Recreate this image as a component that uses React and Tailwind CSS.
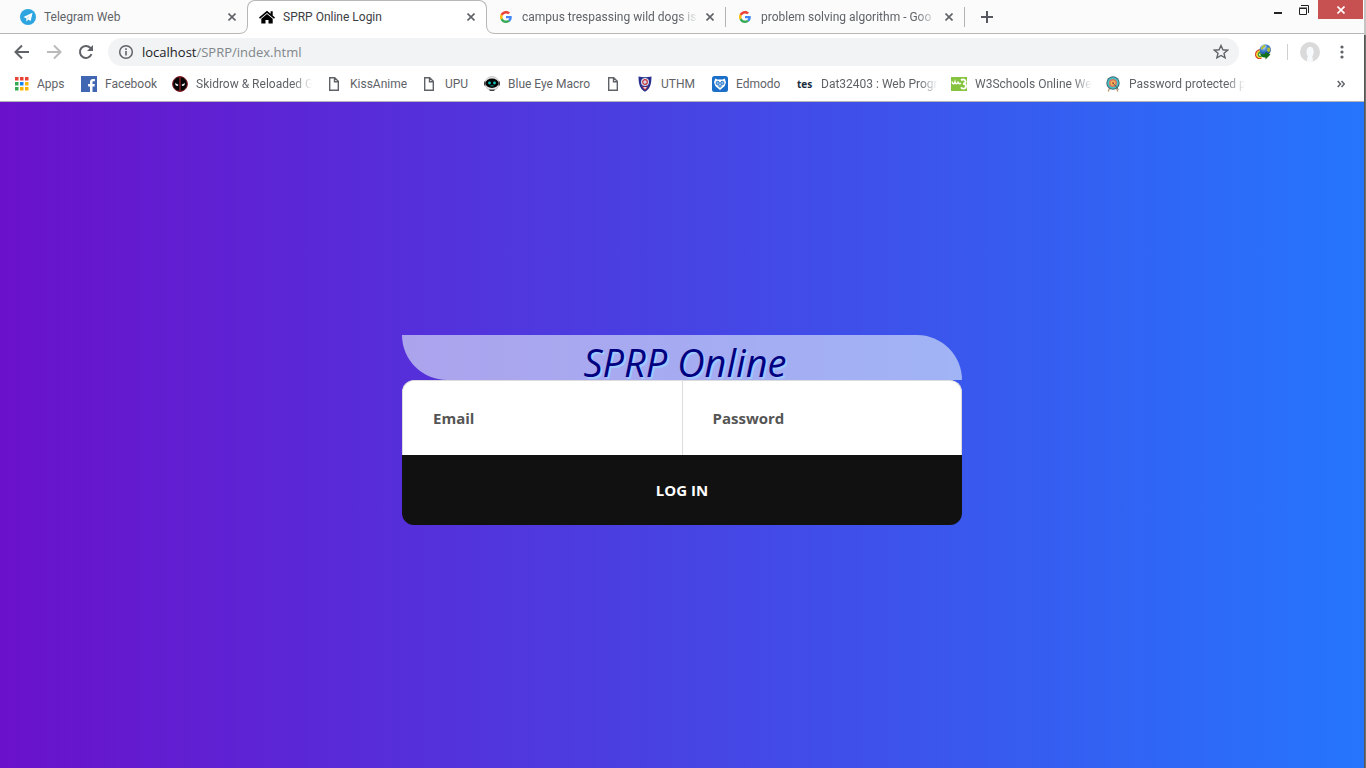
import React from "react";

const GoogleIcon = () => (
  <span className="flex size-4 shrink-0 items-center justify-center">
    <svg className="size-3" viewBox="0 0 48 48" aria-hidden="true">
      <path fill="#EA4335" d="M24 9.5c3.54 0 6.71 1.22 9.21 3.6l6.85-6.85C35.9 2.38 30.47 0 24 0 14.62 0 6.51 5.38 2.56 13.22l7.98 6.19C12.43 13.72 17.74 9.5 24 9.5z" />
      <path fill="#4285F4" d="M46.98 24.55c0-1.57-.15-3.09-.38-4.55H24v9.02h12.94c-.58 2.96-2.26 5.48-4.78 7.18l7.73 6c4.51-4.18 7.09-10.36 7.09-17.65z" />
      <path fill="#FBBC05" d="M10.53 28.59c-.48-1.45-.76-2.99-.76-4.59s.27-3.14.76-4.59l-7.98-6.19C.92 16.46 0 20.12 0 24c0 3.88.92 7.54 2.56 10.78l7.97-6.19z" />
      <path fill="#34A853" d="M24 48c6.48 0 11.93-2.13 15.89-5.81l-7.73-6c-2.15 1.45-4.92 2.3-8.16 2.3-6.26 0-11.57-4.22-13.47-9.91l-7.98 6.19C6.51 42.62 14.62 48 24 48z" />
    </svg>
  </span>
);

const TelegramIcon = () => (
  <svg className="size-4 shrink-0" viewBox="0 0 16 16" aria-hidden="true">
    <circle cx="8" cy="8" r="8" fill="#2ca5e0" />
    <path d="M12.5 3.8 3.5 8l2.6 1.2.5 3.2 1.8-1.8 2.3 1.5z" fill="#fff" />
    <path d="m6.1 9.2 4.4-3.3-3.2 4-.7 2.5z" fill="#b9dff2" />
  </svg>
);

const HomeIcon = () => (
  <svg className="size-4 shrink-0" viewBox="0 0 16 16" aria-hidden="true">
    <path d="M8 1.800 0 8.600l1 1.100L8 3.900l7 5.800 1-1.100-2.300-2V2.200h-2.100v2.600z" fill="#000" />
    <path d="M8 5 2.300 9.700V14.500h4.200v-3.600h3v3.600h4.200V9.700z" fill="#000" />
  </svg>
);

const CloseIcon = ({ className }) => (
  <svg className={className} viewBox="0 0 8 8" aria-hidden="true">
    <path d="m.5.5 7 7m0-7-7 7" stroke="currentColor" strokeWidth="1.6" />
  </svg>
);

const PageIcon = () => (
  <svg className="mr-0.5 h-3.5 w-3 shrink-0" viewBox="0 0 12 14" aria-hidden="true">
    <path d="M1.700.7h5l3.600 3.600v9h-8.600zM6.500.7v4h4" fill="none" stroke="#5f6368" strokeWidth="1.400" />
  </svg>
);

const FacebookIcon = () => (
  <svg className="size-4 shrink-0" viewBox="0 0 16 16" aria-hidden="true">
    <path d="M0 0h16v16H0z" fill="#4267b2" />
    <path d="M9 16v-5.500H7.100V8H9V6.200c0-2 1.200-3.200 3-3.200.9 0 1.700.1 1.900.1v2.200h-1.300c-.9 0-1.100.5-1.100 1.200V8h2.300l-.3 2.500h-2V16z" fill="#fff" />
  </svg>
);

const AppsIcon = () => (
  <svg className="size-3.5 shrink-0" viewBox="0 0 14 14" aria-hidden="true">
    <path d="M0 0h3.500v3.500H0zM5 0h3.500v3.500H5zM10 0h3.500v3.500H10z" fill="#ea4335" />
    <path d="M0 5h3.500v3.500H0zM0 10h3.500v3.500H0z" fill="#34a853" />
    <path d="M5 5h3.500v3.500H5z" fill="#1a84f5" />
    <path d="M10 5h3.500v3.500H10zM5 10h3.500v3.500H5zM10 10h3.500v3.500H10z" fill="#fbb404" />
  </svg>
);

const MaskIcon = () => (
  <svg className="size-4 shrink-0" viewBox="0 0 16 16" aria-hidden="true">
    <circle cx="8" cy="8" r="7.400" fill="#080808" stroke="#8e2026" strokeWidth="1" />
    <path d="M7.300 0h1.400v16H7.300z" fill="#8e2026" />
    <path d="m3 7 3.400 1.800-.6 1.300-2-.6zM13 7 9.600 8.800l.6 1.300 2-.6z" fill="#fff" />
  </svg>
);

const RobotIcon = () => (
  <svg className="size-4 shrink-0" viewBox="0 0 16 16" aria-hidden="true">
    <circle cx="8" cy="7.500" r="7" fill="#e8e8e8" stroke="#aaa" strokeWidth=".6" />
    <ellipse cx="8" cy="7.300" rx="6.600" ry="4.700" fill="#050505" />
    <path d="M0 5.500h1.500v4H0zM14.500 5.500H16v4h-1.500zM5 13.500h6l-1 1.500H6z" fill="#444" />
    <circle cx="5.500" cy="7" r="1.400" fill="#12c4b7" />
    <circle cx="10.500" cy="7" r="1.400" fill="#12c4b7" />
    <path d="M6.500 9.800h3" stroke="#12c4b7" strokeWidth=".8" />
  </svg>
);

const CrestIcon = () => (
  <svg className="size-4 shrink-0" viewBox="0 0 16 16" aria-hidden="true">
    <path d="M1.500.5c4 1 9 1 13 0-.2 7-.8 12-6.500 15.200C2.300 12.500 1.700 7.500 1.500.5z" fill="#26308c" />
    <circle cx="8" cy="6" r="4" fill="#d8dbe8" />
    <circle cx="8" cy="6" r="2.300" fill="none" stroke="#c7303c" strokeWidth="1.200" />
    <path d="m4.500 10 3.500 1.400L11.500 10 8 14.500z" fill="#c7303c" />
    <path d="m6 11.800 2-.8 2 .8-2 1z" fill="#fff" />
  </svg>
);

const EdmodoIcon = () => (
  <svg className="size-4 shrink-0" viewBox="0 0 16 16" aria-hidden="true">
    <rect width="16" height="16" rx="2.500" fill="#1b6fc9" />
    <path d="M3.200 2.500 5.400 3.600h5.200l2.200-1.100 1.200 4-1.500 3.800L8 14 3.500 10.300 2 6.500z" fill="#fff" />
    <circle cx="5.700" cy="7" r="1.700" fill="#8fbbe8" stroke="#1b6fc9" strokeWidth=".9" />
    <circle cx="10.300" cy="7" r="1.700" fill="#8fbbe8" stroke="#1b6fc9" strokeWidth=".9" />
    <path d="m6.300 9.800 1.700-.8 1.700.8L8 11.500z" fill="#8fbbe8" stroke="#1b6fc9" strokeWidth=".8" />
  </svg>
);

const W3Icon = () => (
  <svg className="size-4 shrink-0" viewBox="0 0 16 16" aria-hidden="true">
    <path d="M0 1h16v14H0z" fill="#86c440" />
    <path d="M1 5.500c.7 3 2.300 3 3 .5.600 2.500 2.400 2.500 3-.3.600 2.200 1.600 2.500 2.800 1.300" fill="none" stroke="#fff" strokeWidth="1.500" />
    <path d="M10 4.200c1.700-1.500 4.600-.6 4.600 1.300 0 1.500-1.200 2.200-2.600 2.300 1.800 0 3 .9 3 2.400 0 2.600-3.800 3.300-5 1.200" fill="none" stroke="#fff" strokeWidth="1.900" />
  </svg>
);

const TargetIcon = () => (
  <svg className="size-4 shrink-0" viewBox="0 0 16 16" aria-hidden="true">
    <path d="m4.500 12-1.200 3.500M11.500 12l1.200 3.500" stroke="#b99565" strokeWidth="1.200" />
    <circle cx="8" cy="7" r="6.700" fill="#3e6d73" />
    <circle cx="8" cy="7" r="5.700" fill="#44c2c8" />
    <circle cx="8" cy="7" r="4" fill="#d97561" />
    <circle cx="8" cy="7" r="2.500" fill="#f6bd51" />
    <circle cx="8" cy="7" r="1.200" fill="#d96149" />
    <path d="m8 7 5.500 6.500" stroke="#46605f" strokeWidth=".9" />
  </svg>
);

const GlobeIcon = () => (
  <svg className="size-4 shrink-0" viewBox="0 0 16 16" aria-hidden="true">
    <defs>
      <radialGradient id="globe" cx=".35" cy=".25" r=".8">
        <stop offset="0" stopColor="#cfe8ff" />
        <stop offset=".45" stopColor="#3c82d2" />
        <stop offset="1" stopColor="#123b7d" />
      </radialGradient>
    </defs>
    <path d="M6 5.500C2 6.200.4 8.500.8 11.500 1.300 14 3.500 14.800 6.500 14" fill="none" stroke="#d43a25" strokeWidth="1.400" />
    <path d="M6 6.800c-3 .7-4.300 2.500-3.900 4.700.5 1.500 2.500 2 4.400 1.500" fill="none" stroke="#f5d328" strokeWidth="1.800" />
    <path d="M6 8c-2 .5-2.900 1.800-2.600 3.300.4 1 2 1.200 3.100.8" fill="none" stroke="#3a9a35" strokeWidth="1.300" />
    <circle cx="10.200" cy="5.800" r="5.600" fill="url(#globe)" />
    <path d="M9 1c2 .2 2 1.500 .5 2.300S8 5.700 6.500 5.400 7 1.700 9 1zM12.500 3.700l2-.5c1.200 2 1 3.500-.5 5l-2-1.500z" fill="#b5bf35" />
    <path d="M5 9c2 1.600 4 1.400 5 .8V8l5.500 2.500L10.500 15.500v-2C7.500 13.800 5.200 12.300 5 9z" fill="#12701a" />
  </svg>
);

const Tab = ({ icon, title, active, fade, divider }) => (
  <div
    role="tab"
    aria-selected={!!active}
    className={`flex shrink-0 items-center gap-2 pl-[11px] ${
      active
        ? "relative z-10 -ml-px h-[34px] w-[240px] rounded-t-lg border border-b-0 border-[#b7b7b7] bg-white pr-[11px] pb-0.5"
        : "h-[33px] w-[239px] pr-3"
    }`}
  >
    {active && (
      <>
        <svg className="absolute bottom-0 -left-[9px] size-[9px]" viewBox="0 0 9 9" aria-hidden="true">
          <path d="M0 8.500Q8.500 8.500 8.500 0H9v9H0z" fill="#fff" />
          <path d="M0 8.500Q8.500 8.500 8.500 0" fill="none" stroke="#b7b7b7" />
        </svg>
        <svg className="absolute -right-[9px] bottom-0 size-[9px]" viewBox="0 0 9 9" aria-hidden="true">
          <path d="M9 8.500Q.5 8.500 .5 0H0v9h9z" fill="#fff" />
          <path d="M9 8.500Q.5 8.500 .5 0" fill="none" stroke="#b7b7b7" />
        </svg>
      </>
    )}
    {icon}
    <span
      className={`min-w-0 flex-1 overflow-hidden text-left whitespace-nowrap ${active ? "text-[#3c4043]" : "text-[#5f6368]"} ${
        fade ? "[mask-image:linear-gradient(to_right,black_88%,transparent)]" : ""
      }`}
    >
      {title}
    </span>
    <button aria-label={`Close ${title}`} className="text-[#5f6368]">
      <CloseIcon className="size-2" />
    </button>
    {divider && <span className="-mr-3 ml-[3px] h-5 w-px bg-[#b4b4b4]" />}
  </div>
);

const Bookmark = ({ icon, label, width, fade }) => (
  <a href="#" aria-label={label || "Bookmark"} className={`flex shrink-0 items-center gap-2 ${width}`}>
    {icon}
    {label && (
      <span className={`min-w-0 overflow-hidden whitespace-nowrap ${fade ? "[mask-image:linear-gradient(to_right,black_84%,transparent)]" : ""}`}>
        {label}
      </span>
    )}
  </a>
);

const TesIcon = () => <span className="w-4 shrink-0 font-['Open_Sans',sans-serif] text-[10px] leading-4 font-bold text-[#182c3d]">tes</span>;

const bookmarks = [
  { icon: <AppsIcon />, label: "Apps", width: "w-[66px]" },
  { icon: <FacebookIcon />, label: "Facebook", width: "w-[91px]" },
  { icon: <MaskIcon />, label: "Skidrow & Reloaded G", width: "w-[156px] pr-[16px]", fade: true },
  { icon: <PageIcon />, label: "KissAnime", width: "w-[95px]" },
  { icon: <PageIcon />, label: "UPU", width: "w-[61px]" },
  { icon: <RobotIcon />, label: "Blue Eye Macro", width: "w-[123px]" },
  { icon: <PageIcon />, width: "w-[30px]" },
  { icon: <CrestIcon />, label: "UTHM", width: "w-[75px]" },
  { icon: <EdmodoIcon />, label: "Edmodo", width: "w-[85px]" },
  { icon: <TesIcon />, label: "Dat32403 : Web Progr", width: "w-[154px] pr-[12px]", fade: true },
  { icon: <W3Icon />, label: "W3Schools Online We", width: "w-[154px] pr-[12px]", fade: true },
  { icon: <TargetIcon />, label: "Password protected p", width: "w-[140px]", fade: true },
];

const Browser = () => (
  <header className="border-b border-[#b5b5b5] bg-white font-['Roboto',sans-serif] text-xs text-[#5f6368]">
    <div className="flex h-[34px] items-start border-b border-[#b7b7b7] bg-[#fbfbfb] pl-[9px]">
      <div role="tablist" className="flex">
        <Tab icon={<TelegramIcon />} title="Telegram Web" />
        <Tab icon={<HomeIcon />} title="SPRP Online Login" active />
        <Tab icon={<GoogleIcon />} title="campus trespassing wild dogs iss" fade divider />
        <Tab icon={<GoogleIcon />} title="problem solving algorithm - Goo" fade divider />
      </div>
      <button aria-label="New tab" className="flex h-[33px] w-11 items-center justify-center">
        <svg className="size-3" viewBox="0 0 12 12"><path d="M6 0v12M0 6h12" stroke="#55595f" strokeWidth="2" /></svg>
      </button>
      <div className="ml-auto flex h-[19px] pr-px">
        <button aria-label="Minimize" className="flex w-7 items-center justify-center">
          <svg className="h-4 w-2" viewBox="0 0 8 16"><path d="M0 10h8v2H0z" fill="#222" /></svg>
        </button>
        <button aria-label="Restore" className="flex w-6 items-center justify-center">
          <svg className="size-2.5" viewBox="0 0 10 10"><path d="M.5 3.500h7v6h-7zM0 3h8M2 .5h7.500V8" fill="none" stroke="#222" /></svg>
        </button>
        <button aria-label="Close window" className="ml-[2px] flex w-[45px] items-center justify-center bg-[#c75050] text-white">
          <CloseIcon className="size-2" />
        </button>
      </div>
    </div>
    <div className="flex h-9 items-center pr-3.5 pl-3.5">
      <div className="flex w-[94px] items-center gap-4">
        <button aria-label="Back"><svg className="size-4" viewBox="0 0 16 16"><path d="M15 8H2M8 1.500 1.500 8 8 14.500" fill="none" stroke="#5f6368" strokeWidth="2" /></svg></button>
        <button aria-label="Forward"><svg className="size-4" viewBox="0 0 16 16"><path d="M1 8h13M8 1.500 14.500 8 8 14.500" fill="none" stroke="#bababa" strokeWidth="2" /></svg></button>
        <button aria-label="Reload"><svg className="size-4" viewBox="0 0 16 16"><path d="M13.500 10.200A6 6 0 1 1 12.300 3.800L14 5.500" fill="none" stroke="#5f6368" strokeWidth="2" /><path d="M15 1v6H9z" fill="#5f6368" /></svg></button>
      </div>
      <div className="flex h-7 min-w-0 flex-1 items-center gap-2 rounded-full bg-[#f1f3f4] px-2.5">
        <svg className="size-4 shrink-0" viewBox="0 0 16 16"><circle cx="8" cy="8" r="6.300" fill="none" stroke="#5f6368" strokeWidth="1.500" /><path d="M7.200 7h1.600v4.500H7.200zM7.200 4.300h1.600v1.600H7.200z" fill="#5f6368" /></svg>
        <div className="flex-1 font-['Open_Sans',sans-serif] text-[13px] leading-5 text-[#80868b]"><span className="text-[#202124]">localhost</span>/SPRP/index.html</div>
        <button aria-label="Bookmark this page"><svg className="size-4" viewBox="0 0 16 16"><path d="m8 1.500 1.900 4.300 4.700.4-3.600 3.100 1.100 4.600L8 11.500l-4.100 2.400L5 9.300 1.400 6.200l4.700-.4z" fill="none" stroke="#5f6368" strokeWidth="1.400" /></svg></button>
      </div>
      <button aria-label="Download extension" className="ml-4"><GlobeIcon /></button>
      <span className="ml-4 h-4 w-px bg-[#d0d0d0]" />
      <button aria-label="Profile" className="ml-3">
        <svg className="size-5" viewBox="0 0 20 20"><circle cx="10" cy="10" r="10" fill="#dadada" /><path d="M7 19.500v-3l1-2c-2-2-2.500-9.500 2.200-9.700 4.500.2 4 7.500 2 9.700l.6 2v3c-2.200.7-4 .7-5.800 0z" fill="#f7fafc" /></svg>
      </button>
      <button aria-label="Menu" className="ml-3.5"><svg className="size-4" viewBox="0 0 16 16" fill="#5f6368"><circle cx="8" cy="3" r="1.600" /><circle cx="8" cy="8" r="1.600" /><circle cx="8" cy="13" r="1.600" /></svg></button>
    </div>
    <nav aria-label="Bookmarks" className="flex h-[31px] items-center pb-1 pl-[15px]">
      {bookmarks.map((b, i) => <Bookmark key={i} {...b} />)}
      <button aria-label="More bookmarks" className="mr-[19px] ml-auto"><svg className="size-2" viewBox="0 0 8 8"><path d="m.7 1 2.800 3-2.800 3M4.500 1l2.800 3-2.800 3" fill="none" stroke="#5f6368" strokeWidth="1.500" /></svg></button>
    </nav>
  </header>
);

export default function App() {
  return (
    <div className="flex min-h-screen font-['Open_Sans','Noto_Sans',sans-serif]">
      <div className="flex min-w-0 flex-1 flex-col">
        <Browser />
        <main className="flex flex-1 flex-col items-center justify-center bg-linear-to-r/srgb from-[#6a11cb] to-[#2575fc] px-4 pb-2.5">
          <form className="w-full max-w-[560px]" onSubmit={(e) => e.preventDefault()}>
            <h1 className="h-[45px] rounded-tr-[45px] rounded-bl-[45px] bg-[#e6f2fa]/60 pt-1 pl-1.5 text-center text-[38px] leading-[46px] text-[#000080] italic [text-shadow:2px_2px_#a0c8ff]">
              SPRP Online
            </h1>
            <div className="flex h-[75px] overflow-hidden rounded-t-xl border border-b-0 border-[#dcdcdc] bg-white">
              <input aria-label="Email" type="email" placeholder="Email" className="min-w-0 flex-1 border-r border-[#dcdcdc] px-[30px] text-[15px] font-bold text-[#555] outline-none placeholder:text-[#555]" />
              <input aria-label="Password" type="password" placeholder="Password" className="min-w-0 flex-1 px-[30px] text-[15px] font-bold text-[#555] outline-none placeholder:text-[#555]" />
            </div>
            <button type="submit" className="h-[70px] w-full rounded-b-xl bg-[#111] text-[15px] font-bold text-white">LOG IN</button>
          </form>
        </main>
      </div>
      <div className="flex w-0.5 shrink-0 flex-col">
        <div className="h-[35px] bg-[#c4c4c4]" />
        <div className="flex-1 border-l border-[#555] bg-[#707070]" />
      </div>
    </div>
  );
}
